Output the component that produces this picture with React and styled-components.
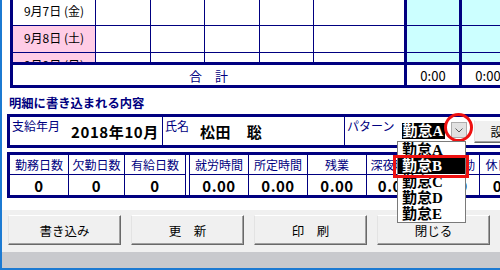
import React from 'react';
import styled, { createGlobalStyle } from 'styled-components';

const NAVY = '#000080';
const FONT = '"Noto Sans CJK JP", "Noto Sans", sans-serif';
const SERIF_BOLD = '"Liberation Serif", "Noto Sans CJK JP", serif';

const GlobalStyle = createGlobalStyle`
  html, body {
    margin: 0;
    padding: 0;
    background: #fff;
  }
  body {
    font-family: ${FONT};
    overflow: hidden;
  }
  * {
    box-sizing: border-box;
  }
`;

const Window = styled.div`
  position: relative;
  width: 500px;
  height: 270px;
  overflow: hidden;
  display: flex;
  flex-direction: column;
  border-left: 2px solid #1c7ad2;
  border-bottom: 2px solid #1c7ad2;
  background: #fff;
`;

const Content = styled.div`
  height: 210px;
  flex: none;
  display: flex;
  flex-direction: column;
  align-items: flex-start;
  background: #fff;
`;

/* ---- top sheet ---- */

const Sheet = styled.div`
  margin-left: 8px;
  width: 560px;
  flex: none;
  border-left: 3px solid ${NAVY};
  border-bottom: 3px solid ${NAVY};
`;

const SheetBody = styled.div`
  height: 62px;
  overflow: hidden;
`;

const SheetScroll = styled.div`
  margin-top: -1px;
`;

const Row = styled.div`
  display: flex;
  height: 27px;
  border-bottom: 1px solid ${NAVY};
`;

const Cell = styled.div`
  width: ${p => p.$w}px;
  flex: none;
  border-right: ${p => (p.$thick ? 3 : 1)}px solid ${NAVY};
  background: ${p => p.$bg || '#fff'};
  display: flex;
  align-items: flex-start;
  justify-content: center;
  padding-top: 5px;
  font-size: 12px;
  line-height: 14px;
  color: #000;
`;

const TotalRow = styled.div`
  display: flex;
  height: 23px;
  border-top: 3px solid ${NAVY};
`;

const TotalLabel = styled.div`
  width: 394px;
  flex: none;
  border-right: 3px solid ${NAVY};
  display: flex;
  align-items: center;
  justify-content: center;
  font-size: 13px;
  color: ${NAVY};
`;

const TotalCell = styled.div`
  width: 55px;
  flex: none;
  border-right: 3px solid ${NAVY};
  display: flex;
  align-items: center;
  justify-content: center;
  font-size: 13px;
  color: #000;
`;

/* ---- detail section ---- */

const SectionTitle = styled.div`
  margin: 8px 0 0 7px;
  font-size: 12.3px;
  line-height: 14px;
  font-weight: 700;
  color: ${NAVY};
`;

const InfoBox = styled.div`
  margin: 4px 0 0 5px;
  width: 620px;
  height: 34px;
  flex: none;
  display: flex;
  border: 3px solid ${NAVY};
`;

const InfoCell = styled.div`
  width: ${p => (p.$w ? `${p.$w}px` : 'auto')};
  flex: ${p => (p.$w ? 'none' : '1')};
  border-right: ${p => (p.$w ? `1px solid ${NAVY}` : 'none')};
  display: flex;
  align-items: flex-start;
  padding: 2px 0 0 2px;
`;

const Label = styled.span`
  font-size: 12px;
  line-height: 14px;
  color: ${NAVY};
  white-space: nowrap;
`;

const Value = styled.span`
  margin: 5px 0 0 11px;
  font-size: 15px;
  line-height: 16px;
  font-weight: 700;
  letter-spacing: 0.6px;
  color: #000;
  white-space: nowrap;
`;

const SelectValue = styled.span`
  margin: 4px 0 0 8px;
  width: 43px;
  height: 16px;
  background: #000;
  color: #fff;
  font-family: ${SERIF_BOLD};
  font-weight: 700;
  font-size: 15px;
  line-height: 16px;
  white-space: nowrap;
  overflow: hidden;
`;

const DropButton = styled.span`
  margin: 3px 0 0 6px;
  width: 16px;
  height: 16px;
  background: #e1e1e1;
  border: 1px solid #adadad;
  display: flex;
  align-items: center;
  justify-content: center;
`;

const WinButton = styled.button`
  width: ${p => p.$w}px;
  height: ${p => p.$h}px;
  margin: ${p => p.$m || '0'};
  flex: none;
  padding: 0 0 0 ${p => p.$indent || 0}px;
  background: #f0f0f0;
  border: 1px solid;
  border-color: #fff #696969 #696969 #e3e3e3;
  box-shadow: inset -1px -1px 0 #a0a0a0;
  font-family: ${FONT};
  font-size: 12.5px;
  color: #000;
  text-align: ${p => (p.$indent ? 'left' : 'center')};
  white-space: pre;
`;

/* ---- summary grid ---- */

const Summary = styled.div`
  margin: 4px 0 0 5px;
  width: 620px;
  height: 46px;
  flex: none;
  display: flex;
  border: 3px solid ${NAVY};
`;

const SumCol = styled.div`
  width: ${p => p.$w}px;
  flex: none;
  display: flex;
  flex-direction: column;
  border-right: 1px solid ${NAVY};
  border-left: ${p => (p.$split ? `1px solid ${NAVY}` : 'none')};
  margin-left: ${p => (p.$split ? 3 : 0)}px;
`;

const SumHead = styled.div`
  height: 20px;
  border-bottom: 1px solid ${NAVY};
  display: flex;
  align-items: center;
  justify-content: center;
  font-size: 12px;
  color: ${NAVY};
  white-space: nowrap;
  overflow: hidden;
`;

const SumValue = styled.div`
  height: 20px;
  display: flex;
  align-items: center;
  justify-content: center;
  font-size: 15px;
  font-weight: 700;
  letter-spacing: 0.5px;
  color: #000;
`;

/* ---- bottom bars ---- */

const ButtonBar = styled.div`
  height: 42px;
  flex: none;
  display: flex;
  gap: 10px;
  padding: 5px 0 0 6px;
  background: #f0f0f0;
`;

const StatusBand = styled.div`
  height: 16px;
  flex: none;
  background: #c8c9cd;
`;

/* ---- overlays ---- */

const DropList = styled.div`
  position: absolute;
  left: 395px;
  top: 141px;
  width: 69px;
  height: 82px;
  background: #fff;
  border: 1px solid #7a7a7a;
`;

const DropItem = styled.div`
  height: 16px;
  padding-left: 4px;
  background: ${p => (p.$active ? '#000' : '#fff')};
  color: ${p => (p.$active ? '#fff' : '#000')};
  font-family: ${SERIF_BOLD};
  font-weight: 700;
  font-size: 15px;
  line-height: 16px;
  white-space: nowrap;
`;

const MarkCircle = styled.div`
  position: absolute;
  left: 442px;
  top: 113px;
  width: 29px;
  height: 29px;
  border: 3px solid #ee1111;
  border-radius: 50%;
`;

const MarkRect = styled.div`
  position: absolute;
  left: 391px;
  top: 155px;
  width: 76px;
  height: 23px;
  border: 3px solid #ee1111;
`;

const PINK = '#ffcce6';
const CYAN = '#ccffff';
const colWidths = [55, 54, 55, 54];

const days = [
  { label: '9月7日 (金)', bg: '#fff' },
  { label: '9月8日 (土)', bg: PINK },
  { label: '9月9日 (日)', bg: PINK },
];

const summaryCols = [
  { head: '勤務日数', val: '0', w: 59 },
  { head: '欠勤日数', val: '0', w: 56 },
  { head: '有給日数', val: '0', w: 61 },
  { head: '就労時間', val: '0.00', w: 60, split: true },
  { head: '所定時間', val: '0.00', w: 59 },
  { head: '残業', val: '0.00', w: 59 },
  { head: '深夜時間', val: '0.00', w: 56 },
  { head: '休日出勤', val: '0.00', w: 57 },
  { head: '休日時間', val: '0.00', w: 60 },
];

const patterns = ['勤怠A', '勤怠B', '勤怠C', '勤怠D', '勤怠E'];

const Chevron = () => (
  <svg width="8" height="5" viewBox="0 0 8 5">
    <polyline points="0.5,0.5 4,4 7.5,0.5" fill="none" stroke="#5a5a5a" strokeWidth="1" />
  </svg>
);

const App = () => {
  return (
    <>
      <GlobalStyle />
      <Window>
        <Content>
          <Sheet>
            <SheetBody>
              <SheetScroll>
                {days.map(d => (
                  <Row key={d.label}>
                    <Cell $w={83} $bg={d.bg}>{d.label}</Cell>
                    {colWidths.map((w, i) => (
                      <Cell key={i} $w={w} />
                    ))}
                    <Cell $w={93} $thick />
                    <Cell $w={55} $thick $bg={CYAN} />
                    <Cell $w={55} $thick $bg={CYAN} />
                  </Row>
                ))}
              </SheetScroll>
            </SheetBody>
            <TotalRow>
              <TotalLabel>合　計</TotalLabel>
              <TotalCell>0:00</TotalCell>
              <TotalCell>0:00</TotalCell>
            </TotalRow>
          </Sheet>

          <SectionTitle>明細に書き込まれる内容</SectionTitle>

          <InfoBox>
            <InfoCell $w={153}>
              <Label>支給年月</Label>
              <Value>2018年10月</Value>
            </InfoCell>
            <InfoCell $w={182}>
              <Label>氏名</Label>
              <Value>松田　聡</Value>
            </InfoCell>
            <InfoCell>
              <Label>パターン</Label>
              <SelectValue>勤怠A</SelectValue>
              <DropButton>
                <Chevron />
              </DropButton>
              <WinButton $w={70} $h={23} $m="1px 0 0 7px" $indent={15}>
                設定
              </WinButton>
            </InfoCell>
          </InfoBox>

          <Summary>
            {summaryCols.map(c => (
              <SumCol key={c.head} $w={c.w} $split={c.split}>
                <SumHead>{c.head}</SumHead>
                <SumValue>{c.val}</SumValue>
              </SumCol>
            ))}
          </Summary>
        </Content>

        <ButtonBar>
          <WinButton $w={113} $h={30}>書き込み</WinButton>
          <WinButton $w={113} $h={30}>更　新</WinButton>
          <WinButton $w={113} $h={30}>印　刷</WinButton>
          <WinButton $w={113} $h={30}>閉じる</WinButton>
        </ButtonBar>
        <StatusBand />

        <MarkCircle />
        <DropList>
          {patterns.map((p, i) => (
            <DropItem key={p} $active={i === 1}>{p}</DropItem>
          ))}
        </DropList>
        <MarkRect />
      </Window>
    </>
  );
};

export default App;
